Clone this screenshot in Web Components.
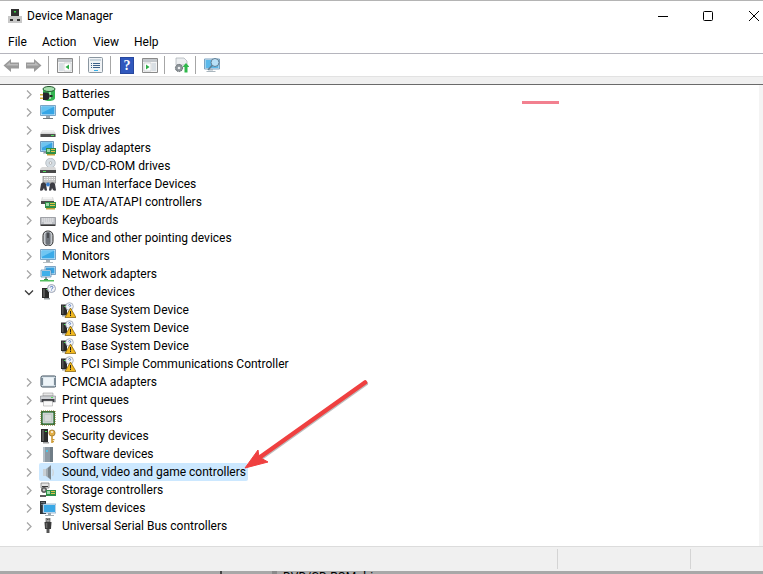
<!DOCTYPE html>
<html>
<head>
<meta charset="utf-8">
<title>Device Manager</title>
<style>
  html, body { margin: 0; padding: 0; background: #fff; }
  body { width: 763px; height: 574px; overflow: hidden; font: 12px Roboto, "Open Sans", sans-serif; color: #000; }
</style>
</head>
<body>
<dm-window></dm-window>
<script>
// all the device icons, drawn on a 16x16 grid
const ICONS = {
  battery: `<path d="M3 3v9c0 1.800 2.700 3 6 3s6-1.200 6-3V3z" fill="#35b552"/><path d="M9 4h2v9H9z" fill="#9be8a8"/><ellipse cx="9" cy="3" rx="6" ry="2.500" fill="#a6dfae" stroke="#24592f"/><path d="M0 8h4v1.400H0zM0 11.500h4v1.400H0z" fill="#d3b23a"/><path d="M3 6.500h4c1.500 0 2.500 1.500 2.500 3.500S8.500 14 7 14H3z" fill="#26262c"/><path d="M9.500 9h3v2h-3z" fill="#2a2a2a"/>`,
  computer: `<path d="M.5 1.500h15v10H.5z" fill="#e8f4fb" stroke="#5c8fb8" stroke-width=".8"/><path d="M1.500 2.500h13v8h-13z" fill="#35a5e6"/><path d="M1.500 2.500h13L1.500 9z" fill="#66c2f0"/><path d="M6 12h4v2H6z" fill="#9aa6ae"/><path d="M3 14h10v1H3z" fill="#707a80"/>`,
  disk: `<path d="M3 8h10l2.500 3v4H.5v-4z" fill="#d6d6d6"/><path d="M3 8h10l1.500 2.500h-13z" fill="#efefef"/><path d="M.5 12h15v3H.5z" fill="#4f4f4f"/><path d="M11 13h3v1h-3z" fill="#52e05e"/>`,
  display: `<path d="M.5 1.500h13v10H.5z" fill="#dcecf6" stroke="#4f83ad" stroke-width=".8"/><path d="M1.500 2.500h11v8h-11z" fill="#37a3e2"/><path d="M1.500 2.500h11L1.500 8z" fill="#6cc3f0"/><path d="M4 11.500h3v2H3z" fill="#8a959c"/><path d="M6 8h10v6H6z" fill="#2f8f48"/><path d="M7 9h3v3H7z" fill="#9ed7a8"/><path d="M11 9h4v1h-4zM11 11h4v1h-4z" fill="#e1c24a"/><path d="M7 14h8v1.500H7z" fill="#c2a13a"/>`,
  dvd: `<circle cx="10.500" cy="5" r="4.800" fill="#d5dde3" stroke="#a0a8ae" stroke-width=".6"/><circle cx="10.500" cy="5" r="1.300" fill="#fff" stroke="#888" stroke-width=".5"/><path d="M2 9h13l1 2v3H0v-3z" fill="#d9d9d9"/><path d="M0 12h16v3H0z" fill="#4a4a4a"/><path d="M3 13h3v1H3z" fill="#55dd60"/>`,
  hid: `<path d="M3 0h13v7H3z" fill="#c6c6c6" stroke="#6e6e6e" stroke-width=".6"/><path d="M4 1h1.500v1H4zM6.500 1H8v1H6.500zM9 1h1.500v1H9zM11.500 1H13v1h-1.500zM14 1h1v1h-1zM4 3h1.500v1H4zM6.500 3H8v1H6.500zM9 3h1.500v1H9zM11.500 3H13v1h-1.500zM14 3h1v1h-1z" fill="#f4f4f4"/><path d="M1 8c1-2 4-2 5 0l1 6c0 1-2 1-2.500 0L4 12l-1 2c-1 1-3 1-3 0z" fill="#3c3c44"/><path d="M10 8c1-2 4-2 5 0l1 6c0 1-2 1-3 0l-1-2-.5 2c-.5 1-2.500 1-2.500 0z" fill="#3c3c44"/><circle cx="8" cy="8.500" r="1.900" fill="#3a7fd0"/>`,
  ide: `<path d="M2 3h11l1 3v3H1V6z" fill="#e2e2e2"/><path d="M1 7h13v3H1z" fill="#4c4c4c"/><path d="M3 3h9v2H3z" fill="#f5f5f5"/><path d="M5 8h11v6H5z" fill="#2f8f48"/><path d="M6 9h3v3H6z" fill="#a4dbae"/><path d="M10 9h5v1h-5zM10 11h5v1h-5z" fill="#e1c24a"/><path d="M6 14h9v1.500H6z" fill="#c2a13a"/>`,
  keyboard: `<path d="M.5 5.500h15v7H.5z" fill="#bcbfc4" stroke="#85888e" stroke-width=".7"/><path d="M2 6.500h1.500v1H2zM4 6.500h1.500v1H4zM6 6.500h1.500v1H6zM8 6.500h1.500v1H8zM10 6.500h1.500v1H10zM12 6.500h1.500v1H12zM2 8.500h1.500v1H2zM4 8.500h1.500v1H4zM6 8.500h1.500v1H6zM8 8.500h1.500v1H8zM10 8.500h1.500v1H10zM12 8.500h1.500v1H12zM4 10.500h8v1H4z" fill="#f6f6f6"/><path d="M.5 12.500h15V14H.5z" fill="#3a3a3a"/>`,
  mouse: `<rect x="3" y="1" width="10" height="15" rx="4.500" fill="#c4c8cc" stroke="#2e2e2e"/><rect x="5.500" y="2" width="5" height="13" rx="2.500" fill="#6c7178"/><path d="M7.500 3h1v5h-1z" fill="#262626"/>`,
  monitor: `<path d="M.5 1.500h15v10H.5z" fill="#e8f4fb" stroke="#5c8fb8" stroke-width=".8"/><path d="M1.500 2.500h13v8h-13z" fill="#3aaae8"/><path d="M1.500 2.500h13L1.500 9z" fill="#70c6f2"/><path d="M6 12h4v2H6z" fill="#a5afb5"/><path d="M3 14h10v.800H3z" fill="#a5afb5"/>`,
  network: `<path d="M5 .5h10.500v8H5z" fill="#dcecf6" stroke="#4f83ad" stroke-width=".7"/><path d="M6 1.500h8.500v6H6z" fill="#37a3e2"/><path d="M1 4h10v7H1z" fill="#dcecf6" stroke="#4f83ad" stroke-width=".7"/><path d="M2 5h8v5H2z" fill="#3fb0ea"/><path d="M5 11h2v2H5z" fill="#8a959c"/><path d="M0 14h14v1.500H0z" fill="#54c060"/><path d="M4 13h4v1H4z" fill="#2f8f48"/>`,
  other: `<path d="M2 4h7v10H2z" fill="#2a2a2a"/><path d="M3 5h2v8H3z" fill="#565656"/><path d="M6 5h2v1H6z" fill="#3fd24a"/><path d="M4 14h6v1.500H4z" fill="#9aa0a4"/><circle cx="11.500" cy="4.500" r="4" fill="#f2f4f8" stroke="#9ca4b4"/><path d="M10.200 3.500c.2-1.600 2.700-1.600 2.700 0 0 1-1.300 1-1.300 2M11.400 6.700h.5" fill="none" stroke="#3867b8" stroke-width=".9"/>`,
  warn: `<path d="M1 2.500h6v10.500H1z" fill="#2a2a2a"/><path d="M2 3.500h1.500V12H2z" fill="#565656"/><path d="M4 4h2v1H4z" fill="#3fd24a"/><path d="M2 13h5v1.500H2z" fill="#9aa0a4"/><circle cx="9.500" cy="4.500" r="3.800" fill="#f2f4f8" stroke="#9ca4b4" stroke-width=".8"/><path d="M8.400 3.500c.2-1.200 2.200-1.200 2.200 0 0 .8-1 .8-1 1.600" fill="none" stroke="#3867b8" stroke-width=".8"/><path d="M10.500 6 16 15.500H5z" fill="#f2b91f" stroke="#7d5a08" stroke-width=".7"/><path d="M10 9h1v3.500h-1zM10 13h1v1h-1z" fill="#222"/>`,
  pcmcia: `<rect x="1" y="2" width="15" height="11" rx="1.500" fill="#d4e0e8" stroke="#3e4f5c"/><path d="M3.500 3.500h10v8h-10z" fill="#eef4f8"/><path d="M1 4h2v7H1zM14 4h2v7h-2z" fill="#7c8c98"/>`,
  print: `<path d="M3 1h10v3H3z" fill="#e7e7e7" stroke="#888" stroke-width=".5"/><path d="M.5 4h15v6H.5z" fill="#cfd2d6" stroke="#6e7276" stroke-width=".5"/><path d="M1.500 7h13v3h-13z" fill="#3d3f44"/><path d="M11 5h2v1h-2z" fill="#55dd60"/><path d="M3.500 9h9v5h-9z" fill="#f9f9f9" stroke="#999" stroke-width=".5"/>`,
  cpu: `<path d="M1 1h14v14H1z" fill="#32733f" stroke="#7a6a1e" stroke-width="1" stroke-dasharray="1 1"/><path d="M3 3h10v10H3z" fill="#c4cac8" stroke="#e3e6e5" stroke-width=".6"/><path d="M5 5h6v6H5z" fill="#d6dad9"/>`,
  security: `<path d="M1 1h7v13H1z" fill="#2a2a2a"/><path d="M2 2h2v11H2z" fill="#565656"/><path d="M5 3h2v1H5z" fill="#3fd24a"/><path d="M3 14h6v1.500H3z" fill="#a0a0a0"/><circle cx="12" cy="5" r="3.100" fill="#e3b04a" stroke="#8f6a1c" stroke-width=".7"/><circle cx="12" cy="4" r=".9" fill="#fff"/><path d="M11.200 8h1.600v7h-1.600zM12.800 11h1.700v1.200h-1.700zM12.800 13h1.200v1.200h-1.200z" fill="#cc9a35"/>`,
  software: `<path d="M3 1h10v15H3z" fill="#8d9aa4"/><path d="M3 1h2v15H3z" fill="#b4bfc7"/><path d="M10 1h3v15h-3z" fill="#6f7c86"/><path d="M6 4h2v2H6z" fill="#4fc4e8"/>`,
  sound: `<path d="M3 5h3v7H3z" fill="#c9d0d5"/><path d="M6 5l5-4v15l-5-4z" fill="#a4aeb5"/><path d="M8 4l3-2.500v14L8 13z" fill="#7a858d"/><path d="M12.500 5c1 2 1 5 0 7" fill="none" stroke="#cfd5da" stroke-width="1.200"/>`,
  storage: `<path d="M1 1h8v5H1z" fill="#e5e5e5" stroke="#5a5a5a" stroke-width=".6"/><path d="M2 4h6v1H2z" fill="#3a3a3a"/><circle cx="4" cy="8" r="2.600" fill="#777" stroke="#333" stroke-width=".6"/><circle cx="4" cy="8" r=".9" fill="#eee"/><path d="M6 8h10v6H6z" fill="#2f8f48"/><path d="M7 9h3v3H7z" fill="#a4dbae"/><path d="M11 9h4v1h-4zM11 11h4v1h-4z" fill="#e1c24a"/><path d="M0 13h6v2H0z" fill="#5c5c5c"/>`,
  system: `<path d="M0 1h6v13H0z" fill="#303438"/><path d="M1 2h4v1H1z" fill="#6c7278"/><path d="M1 4h4v1H1z" fill="#6c7278"/><path d="M3 4h13v9H3z" fill="#e1eff8" stroke="#5c8fb8" stroke-width=".6"/><path d="M4 5h11v7H4z" fill="#3aa8e6"/><path d="M8 13h3v2H8z" fill="#9aa6ae"/><path d="M5 15h9v1H5z" fill="#a5afb5"/>`,
  usb: `<path d="M6 0h4v4H6z" fill="#a6a6a6" stroke="#444" stroke-width=".6"/><path d="M7 1h.8v1H7zM8.600 1h.8v1h-.8z" fill="#333"/><path d="M4.500 4h7l-.5 7H5z" fill="#3a3a3a"/><path d="M5.800 5h1.500v5H5.800z" fill="#686868"/><path d="M6.500 11h3v4h-3z" fill="#555"/>`,
  devmgr: `<path d="M4 1h8v8H4z" fill="#303030"/><path d="M7 3h2v1.500H7z" fill="#3fd24a"/><path d="M1 8h14v7H1z" fill="#c8c8c8"/><path d="M3 11h3v2H3zM10 11h3v2h-3z" fill="#333"/>`,
  back: `<path d="M8 2 .5 8.500 8 15v-3.500h8v-6H8z" fill="#9a9a9a"/><path d="M3 8.500 7 5v2h8v1.500z" fill="#bcbcbc"/>`,
  forward: `<path d="M8 2l7.500 6.500L8 15v-3.500H0v-6h8z" fill="#9a9a9a"/><path d="M13 8.500 9 5v2H1v1.500z" fill="#bcbcbc"/>`,
  panelLeft: `<path d="M.5 1.500h15v14H.5z" fill="#f4f4f4" stroke="#8a8a8a"/><path d="M1 2h14v3H1z" fill="#c4c8cc"/><path d="M2 6h4v8H2z" fill="#d9dfe4"/><path d="M7 6h7v8H7z" fill="#fff" stroke="#aab0b4" stroke-width=".5"/><path d="M12 7.500v5L8.500 10z" fill="#2fae48"/>`,
  props: `<rect x=".5" y=".5" width="14" height="15" rx="1" fill="#f0f3f6" stroke="#8a96a0"/><path d="M2 2h11v2H2z" fill="#c7d3dc"/><path d="M3 6h1v1H3zM5 6h7v1H5zM3 8h1v1H3zM5 8h7v1H5zM3 10h1v1H3zM5 10h7v1H5z" fill="#3a5f8a"/><path d="M6 13h4v1H6z" fill="#35b0e8"/>`,
  help: `<path d="M0 0h14v17H0z" fill="#27479e"/><path d="M1 1h12v15H1z" fill="#3058bd"/>`,
  panelRight: `<path d="M.5 1.500h15v14H.5z" fill="#f4f4f4" stroke="#8a8a8a"/><path d="M1 2h14v3H1z" fill="#c4c8cc"/><path d="M10 6h4v8h-4z" fill="#d9dfe4"/><path d="M2 6h7v8H2z" fill="#fff" stroke="#aab0b4" stroke-width=".5"/><path d="M4 7.500v5L7.500 10z" fill="#2fae48"/>`,
  update: `<path d="M3 1h8l3 3v4H3z" fill="#eceef0" stroke="#a8aeb3" stroke-width=".7"/><circle cx="6" cy="11" r="3.600" fill="#8d9499" stroke="#5f666b" stroke-dasharray="1.400 .7"/><circle cx="6" cy="11" r="1.300" fill="#eef0f1"/><path d="M13 6l3.500 4H14.500v5.500h-3V10H9.500z" fill="#2fb84a"/>`,
  scan: `<path d="M.5 2h15v10H.5z" fill="#dcecf6" stroke="#7aa3c2"/><path d="M1.500 3h13v8h-13z" fill="#5ab8ea"/><path d="M5 12h4v1.500H5zM2.500 14h9v1h-9z" fill="#aab6be"/><circle cx="11" cy="5.500" r="4" fill="#cfeafa" fill-opacity=".8" stroke="#5f7e94"/><path d="M8 8.500 4 13" stroke="#5f7e94" stroke-width="1.500"/>`
};

function svgIcon(name, size = 16) {
  return `<svg width="${size}" height="${size}" viewBox="0 0 ${size} ${size}" xmlns="http://www.w3.org/2000/svg">${ICONS[name]}</svg>`;
}

class DmIcon extends HTMLElement {
  connectedCallback() {
    this.attachShadow({ mode: 'open' });
    this.shadowRoot.innerHTML = `
      <style>
        :host { display: block; width: 16px; height: 16px; line-height: 0; flex: none; }
      </style>
      ${svgIcon(this.getAttribute('name'))}
    `;
  }
}

class DmTitlebar extends HTMLElement {
  constructor() {
    super();
    this.attachShadow({ mode: 'open' });
    this.shadowRoot.innerHTML = `
      <style>
        :host { display: flex; align-items: center; height: 24px; padding: 3px 4px 0 7px; border-top: 1px solid #b4b4b4; }
        .title { margin-left: 4px; flex: 1; }
        .caps { display: flex; align-items: center; gap: 35px; }
        .caps svg:last-child { margin-left: 1px; }
        svg { display: block; }
      </style>
      <dm-icon name="devmgr"></dm-icon>
      <span class="title"><slot></slot></span>
      <div class="caps">
        <svg width="10" height="10" viewBox="0 0 10 10"><path d="M0 5.500h10" stroke="#000"/></svg>
        <svg width="10" height="10" viewBox="0 0 10 10"><rect x=".5" y=".5" width="9" height="9" rx="1" fill="none" stroke="#000"/></svg>
        <svg width="10" height="10" viewBox="0 0 10 10"><path d="M0 0 10 10M10 0 0 10" stroke="#000" fill="none"/></svg>
      </div>
    `;
  }
}

class DmMenubar extends HTMLElement {
  constructor() {
    super();
    this.attachShadow({ mode: 'open' });
    this.shadowRoot.innerHTML = `
      <style>
        :host { display: flex; height: 22px; align-items: center; padding: 3px 0 0 8px; border-bottom: 1px solid #b5b5bd; }
        span:nth-of-type(1) { width: 34px; }
        span:nth-of-type(2) { width: 51px; }
        span:nth-of-type(3) { width: 41px; }
      </style>
      <span>File</span><span>Action</span><span>View</span><span>Help</span>
    `;
  }
}

class DmToolbar extends HTMLElement {
  constructor() {
    super();
    this.attachShadow({ mode: 'open' });
    this.shadowRoot.innerHTML = `
      <style>
        :host { display: flex; align-items: center; height: 22px; padding-left: 3px; }
        .sep { width: 1px; height: 18px; background: #a6a6a6; margin: 0 8px 0 6px; }
        .gap { margin-right: 7px; }
        .help { position: relative; width: 14px; height: 17px; margin: 0 8px 0 1px; line-height: 0; }
        .help span { position: absolute; inset: 0; color: #fff; font: bold 14px/17px "Liberation Serif", serif; text-align: center; }
      </style>
      <dm-icon class="gap" name="back"></dm-icon>
      <dm-icon name="forward"></dm-icon>
      <div class="sep"></div>
      <dm-icon name="panelLeft"></dm-icon>
      <div class="sep"></div>
      <dm-icon name="props"></dm-icon>
      <div class="sep"></div>
      <div class="help">${svgIcon('help', 17)}<span>?</span></div>
      <dm-icon name="panelRight"></dm-icon>
      <div class="sep"></div>
      <dm-icon name="update"></dm-icon>
      <div class="sep"></div>
      <dm-icon name="scan"></dm-icon>
    `;
  }
}

class DmNode extends HTMLElement {
  constructor() {
    super();
    this.attachShadow({ mode: 'open' });
  }
  connectedCallback() {
    const open = this.hasAttribute('open');
    const child = this.hasAttribute('child');
    const arrow = open
      ? '<path d="M1 3.500 5 7.500 9 3.500" fill="none" stroke="#3c3c3c" stroke-width="1.300"/>'
      : '<path d="M3 1.500 7 5.500 3 9.500" fill="none" stroke="#a6a6a6" stroke-width="1.300"/>';
    this.shadowRoot.innerHTML = `
      <style>
        :host { display: block; height: 18px; }
        .row { display: flex; align-items: center; height: 18px; padding-left: ${child ? 60 : 24}px; }
        .chev { width: 10px; height: 11px; margin-right: 6px; display: ${child ? 'none' : 'block'}; flex: none; }
        .label { margin-left: ${child ? 5 : 6}px; padding-right: 2px; line-height: 18px; white-space: nowrap; }
        .hit { display: flex; align-items: center; height: 18px; border-radius: 2px; }
        :host([selected]) .hit { background: #cce8ff; margin-left: -1px; padding-left: 1px; }
      </style>
      <div class="row">
        <svg class="chev" viewBox="0 0 10 11">${arrow}</svg>
        <div class="hit">
          <dm-icon name="${this.getAttribute('icon')}"></dm-icon>
          <span class="label"><slot></slot></span>
        </div>
      </div>
    `;
  }
}

class DmTree extends HTMLElement {
  constructor() {
    super();
    this.attachShadow({ mode: 'open' });
    this.shadowRoot.innerHTML = `
      <style>
        :host { display: block; flex: 1; position: relative; border-top: 1px solid #6a6a6a; overflow: hidden; }
        .rail { position: absolute; top: 0; right: 0; bottom: 0; width: 4px; background: #f4f4f4; }
        .mark { position: absolute; left: 522px; top: 16px; width: 37px; height: 3px; background: #f2808f; }
        .arrow { position: absolute; left: 0; top: 0; }
      </style>
      <slot></slot>
      <div class="rail"></div>
      <div class="mark"></div>
      <svg class="arrow" width="763" height="462" viewBox="0 85 763 462">
        <path d="M365 382.500 256 460" fill="none" stroke="#bdbdbd" stroke-width="4.500" stroke-linecap="round" transform="translate(.8 1)"/>
        <path d="M365 382.500 256 460" fill="none" stroke="#ef4040" stroke-width="4.500" stroke-linecap="round"/>
        <path d="M245 468 258 450 259 457 268 462z" fill="#ef4040" stroke="#ef4040" stroke-width="1" stroke-linejoin="round"/>
      </svg>
    `;
  }
}

class DmStatusbar extends HTMLElement {
  constructor() {
    super();
    this.attachShadow({ mode: 'open' });
    this.shadowRoot.innerHTML = `
      <style>
        :host { display: flex; height: 24px; background: #f0f0f0; border-top: 1px solid #dcdcdc; align-items: center; }
        div { height: 20px; border-right: 1px solid #d4d4d4; flex: none; }
        .a { width: 557px; }
        .b { width: 132px; }
      </style>
      <div class="a"></div><div class="b"></div>
    `;
  }
}

class DmBehind extends HTMLElement {
  constructor() {
    super();
    this.attachShadow({ mode: 'open' });
    this.shadowRoot.innerHTML = `
      <style>
        :host { display: flex; height: 3px; background: #a8a8a8; overflow: hidden; align-items: flex-start; }
        .line { width: 2px; height: 3px; margin-left: 220px; background: #444; }
        .ic { width: 5px; height: 3px; margin-left: 50px; background: #8a8a8a; }
        .t { margin-left: 6px; line-height: 14px; margin-top: -1px; white-space: nowrap; }
      </style>
      <div class="line"></div><div class="ic"></div><span class="t">DVD/CD-ROM drives</span>
    `;
  }
}

class DmWindow extends HTMLElement {
  constructor() {
    super();
    this.attachShadow({ mode: 'open' });
    const rows = [
      ['battery', 'Batteries'], ['computer', 'Computer'], ['disk', 'Disk drives'],
      ['display', 'Display adapters'], ['dvd', 'DVD/CD-ROM drives'],
      ['hid', 'Human Interface Devices'], ['ide', 'IDE ATA/ATAPI controllers'],
      ['keyboard', 'Keyboards'], ['mouse', 'Mice and other pointing devices'],
      ['monitor', 'Monitors'], ['network', 'Network adapters'],
      ['other', 'Other devices', 'open'],
      ['warn', 'Base System Device', 'child'], ['warn', 'Base System Device', 'child'],
      ['warn', 'Base System Device', 'child'], ['warn', 'PCI Simple Communications Controller', 'child'],
      ['pcmcia', 'PCMCIA adapters'], ['print', 'Print queues'], ['cpu', 'Processors'],
      ['security', 'Security devices'], ['software', 'Software devices'],
      ['sound', 'Sound, video and game controllers', 'selected'],
      ['storage', 'Storage controllers'], ['system', 'System devices'],
      ['usb', 'Universal Serial Bus controllers']
    ];
    this.shadowRoot.innerHTML = `
      <style>
        :host { display: flex; flex-direction: column; width: 763px; height: 574px; background: #fff; }
        .strip { height: 7px; background: #f0f0f0; border-top: 1px solid #e2e2e2; }
      </style>
      <dm-titlebar>Device Manager</dm-titlebar>
      <dm-menubar></dm-menubar>
      <dm-toolbar></dm-toolbar>
      <div class="strip"></div>
      <dm-tree>
        ${rows.map(([icon, text, flag]) => `<dm-node icon="${icon}" ${flag || ''}>${text}</dm-node>`).join('')}
      </dm-tree>
      <dm-statusbar></dm-statusbar>
      <dm-behind></dm-behind>
    `;
  }
}

customElements.define('dm-icon', DmIcon);
customElements.define('dm-titlebar', DmTitlebar);
customElements.define('dm-menubar', DmMenubar);
customElements.define('dm-toolbar', DmToolbar);
customElements.define('dm-node', DmNode);
customElements.define('dm-tree', DmTree);
customElements.define('dm-statusbar', DmStatusbar);
customElements.define('dm-behind', DmBehind);
customElements.define('dm-window', DmWindow);
</script>
</body>
</html>
